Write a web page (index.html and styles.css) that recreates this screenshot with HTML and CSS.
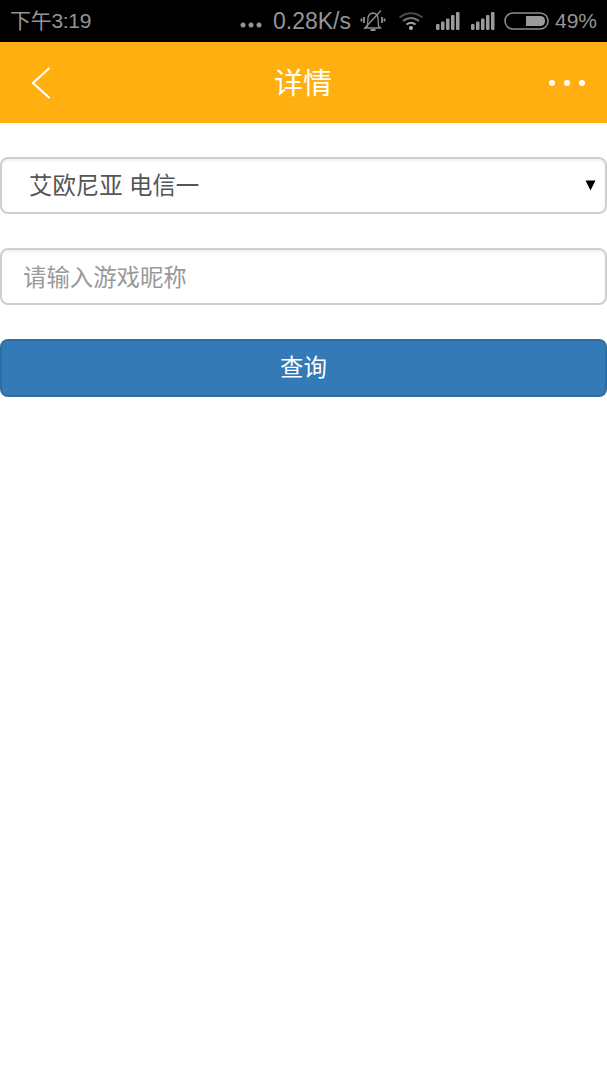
FILE: index.html
```html
<!DOCTYPE html>
<html lang="zh-CN">
<head>
<meta charset="utf-8">
<title>详情</title>
<link rel="stylesheet" href="styles.css">
</head>
<body>
<div class="status">
  <span class="time">下午3:19</span>
  <div class="status-right">
    <svg class="more-dots" width="22" height="6" viewBox="0 0 22 6"><circle cx="3" cy="3" r="2.5"/><circle cx="11" cy="3" r="2.5"/><circle cx="19" cy="3" r="2.5"/></svg>
    <span class="speed">0.28K/s</span>
    <svg class="ico-bell" width="26" height="24" viewBox="0 0 26 24" fill="none" stroke="#8f8f8f" stroke-width="1.3"><path d="M7.500 17 L8 9 Q8.500 4.500 13 4 Q17.500 4.500 18 9 L18.500 17 L20.500 19 L5.500 19 Z"/><path d="M10.500 21 H15.500" stroke-width="2"/><path d="M4 20 L21 1.500"/><path d="M4 8 V14 M1.500 9.500 V12.500 M22 8 V14 M24.500 9.500 V12.500" stroke-width="1.800"/></svg>
    <svg class="ico-wifi" width="26" height="20" viewBox="0 0 26 20" fill="none" stroke="#555"><path d="M1.500 6.500 Q13 -2 24.500 6.500" stroke-width="2" stroke="#4a4a4a"/><path d="M5 10 Q13 4 21 10" stroke-width="2" stroke="#7a7a7a"/><path d="M8.500 13.500 Q13 10 17.500 13.500" stroke-width="2" stroke="#a0a0a0"/><circle cx="13" cy="17" r="2" fill="#b5b5b5" stroke="none"/></svg>
    <svg class="ico-signal" width="24" height="20" viewBox="0 0 24 20" fill="#9a9a9a"><rect x="0" y="13" width="3.500" height="6" rx="1"/><rect x="5" y="10.500" width="3.500" height="8.500" rx="1"/><rect x="10" y="7.500" width="3.500" height="11.500" rx="1"/><rect x="15" y="4" width="3.500" height="15" rx="1"/><rect x="20" y="1" width="3.500" height="18" rx="1"/></svg>
    <svg class="ico-signal" width="24" height="20" viewBox="0 0 24 20" fill="#9a9a9a"><rect x="0" y="13" width="3.500" height="6" rx="1"/><rect x="5" y="10.500" width="3.500" height="8.500" rx="1"/><rect x="10" y="7.500" width="3.500" height="11.500" rx="1"/><rect x="15" y="4" width="3.500" height="15" rx="1"/><rect x="20" y="1" width="3.500" height="18" rx="1"/></svg>
    <svg class="ico-batt" width="45" height="18" viewBox="0 0 45 18" fill="none"><rect x="1" y="1" width="43" height="16" rx="8" stroke="#8f8f8f" stroke-width="1.500"/><path d="M22 4 H36 Q41 4 41 9 Q41 14 36 14 H22 Z" fill="#9a9a9a"/></svg>
    <span class="pct">49%</span>
  </div>
</div>

<header class="bar">
  <svg class="back" width="20" height="32" viewBox="0 0 20 32" fill="none" stroke="#fff" stroke-width="2.200"><path d="M18.500 1 L2 16 L18.500 31"/></svg>
  <h1 class="title">详情</h1>
  <svg class="menu" width="38" height="8" viewBox="0 0 38 8" fill="#fff"><circle cx="4" cy="4" r="3"/><circle cx="19" cy="4" r="3"/><circle cx="34" cy="4" r="3"/></svg>
</header>

<form class="form">
  <div class="select-wrap">
    <select class="field select"><option>艾欧尼亚 电信一</option></select>
    <svg class="arrow" width="11" height="11" viewBox="0 0 11 11"><path d="M0.500 0.500 H10.500 L5.500 10.500 Z" fill="#000"/></svg>
  </div>
  <input class="field input" type="text" placeholder="请输入游戏昵称">
  <button class="btn" type="button">查询</button>
</form>
</body>
</html>
```

FILE: styles.css
```css
* { box-sizing: border-box; }
html, body { margin: 0; padding: 0; background: #fff; }
body { font-family: "Liberation Sans", "Noto Sans CJK SC", sans-serif; width: 607px; height: 1080px; overflow: hidden; }

.status { height: 42px; background: #000; color: #959595; display: flex; align-items: center; justify-content: space-between; padding: 0 10px; font-size: 21px; }
.time { font-size: 21px; line-height: 42px; letter-spacing: -0.3px; }
.status-right { display: flex; align-items: center; }
.more-dots { fill: #959595; margin: 8px 0 0 0; }
.speed { margin-left: 11px; font-size: 23px; }
.ico-bell { margin-left: 9px; }
.ico-wifi { margin-left: 12px; margin-right: 1px; }
.ico-signal { margin-left: 11px; }
.ico-batt { margin-left: 9px; }
.pct { margin-left: 6px; }

.bar { height: 81px; background: #ffb010; display: flex; align-items: center; justify-content: space-between; padding: 0 21px 0 31px; }
.back { flex: none; }
.title { margin: 0; flex: 1; text-align: center; color: #fff; font-size: 29px; font-weight: normal; line-height: 81px; padding: 3px 0 0 7px; }
.menu { flex: none; }

.form { padding-top: 34px; display: flex; flex-direction: column; gap: 34px; }
.select-wrap { position: relative; height: 57px; }
.field { display: block; width: 607px; height: 57px; background: #fff; border: 2px solid #cfcfcf; border-radius: 8px; box-shadow: inset 0 2px 2px rgba(0,0,0,.06); font-family: inherit; font-size: 23.4px; color: #555; outline: none; }
.select { appearance: none; -webkit-appearance: none; padding: 0 0 0 27px; }
.input { padding: 3px 21px 0; }
.input::placeholder { color: #999; opacity: 1; }
.arrow { position: absolute; right: 11px; top: 23px; }
.btn { display: block; width: 607px; height: 58px; background: #337ab7; border: 2px solid #2e6da4; border-radius: 8px; color: #fff; font-family: inherit; font-size: 23.4px; padding: 0 0 4px; }
```
